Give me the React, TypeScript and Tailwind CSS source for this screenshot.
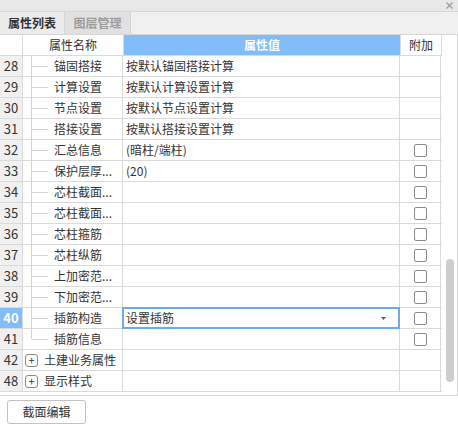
import React from "react";

type Row = {
  no: number;
  name: string;
  value?: string;
  check?: boolean;
  group?: boolean;
  last?: boolean;
  selected?: boolean;
};

const rows: Row[] = [
  { no: 28, name: "锚固搭接", value: "按默认锚固搭接计算" },
  { no: 29, name: "计算设置", value: "按默认计算设置计算" },
  { no: 30, name: "节点设置", value: "按默认节点设置计算" },
  { no: 31, name: "搭接设置", value: "按默认搭接设置计算" },
  { no: 32, name: "汇总信息", value: "(暗柱/端柱)", check: true },
  { no: 33, name: "保护层厚...", value: "(20)", check: true },
  { no: 34, name: "芯柱截面...", check: true },
  { no: 35, name: "芯柱截面...", check: true },
  { no: 36, name: "芯柱箍筋", check: true },
  { no: 37, name: "芯柱纵筋", check: true },
  { no: 38, name: "上加密范...", check: true },
  { no: 39, name: "下加密范...", check: true },
  { no: 40, name: "插筋构造", value: "设置插筋", check: true, selected: true },
  { no: 41, name: "插筋信息", check: true, last: true },
  { no: 42, name: "土建业务属性", group: true },
  { no: 48, name: "显示样式", group: true },
];

function Checkbox() {
  return <div className="w-[13px] h-[13px] rounded-[2px] border border-[#8a8a8a] bg-white" />;
}

function NameCell({ row }: { row: Row }) {
  if (row.group) {
    return (
      <div className="w-[100px] h-full flex items-center border-r border-[#dadada]">
        <div className="ml-[2px] w-[13px] h-[13px] rounded-[3px] border border-[#8a8a8a] flex items-center justify-center text-[11px] leading-none text-[#333]">
          +
        </div>
        <span className="ml-[6px]">{row.name}</span>
      </div>
    );
  }
  return (
    <div className="relative w-[100px] h-full flex items-center border-r border-[#dadada]">
      <div
        className={`absolute left-[8px] top-[-1px] w-px bg-[#d4d4d4] ${row.last ? "h-[11px]" : "h-[22px]"}`}
      />
      <div className="absolute left-[9px] top-[10px] w-[16px] h-px bg-[#d4d4d4]" />
      <span className="ml-[31px] whitespace-nowrap">{row.name}</span>
    </div>
  );
}

export default function App() {
  return (
    <div
      className="w-[458px] h-[427px] bg-white text-[12px] text-[#333] flex flex-col"
      style={{ fontFamily: '"Noto Sans CJK SC", "Noto Sans", sans-serif' }}
    >
      {/* title strip */}
      <div className="h-[12px] bg-[#e8e8e8] border-b border-[#d6d6d6] flex justify-end items-center pr-[5px]">
        <svg width="7" height="7" viewBox="0 0 7 7" className="mb-[1px]">
          <path d="M0.5 0.5 L6.5 6.5 M6.5 0.5 L0.5 6.5" stroke="#9a9a9a" strokeWidth="1.2" />
        </svg>
      </div>

      {/* tabs */}
      <div className="h-[23px] bg-[#f0f0f0] border-b border-[#d6d6d6] flex">
        <div className="w-[65px] h-full bg-[#ebebeb] border-r border-[#d6d6d6] flex items-center justify-center font-bold text-[#333]">
          属性列表
        </div>
        <div className="w-[66px] h-full bg-[#e1e1e1] border-r border-[#d6d6d6] flex items-center justify-center font-bold text-[#9c9c9c]">
          图层管理
        </div>
      </div>

      {/* panel */}
      <div className="h-[361px] flex border-r border-b border-[#d6d6d6]">
        <div className="w-[442px] flex flex-col">
          {/* header */}
          <div className="h-[21px] flex border-b border-[#dadada]">
            <div className="w-[23px] h-full bg-white border-r border-[#dadada]" />
            <div className="w-[101px] h-full flex items-center justify-center border-r border-[#dadada]">
              属性名称
            </div>
            <div className="w-[277px] h-full flex items-center justify-center bg-[#80bdf9] text-white font-bold border-r border-[#dadada]">
              属性值
            </div>
            <div className="w-[41px] h-full flex items-center justify-center border-r border-[#dadada]">
              附加
            </div>
          </div>

          {rows.map((row) => (
            <div key={row.no} className="h-[21px] flex border-b border-[#dadada]">
              <div
                className={`w-[23px] h-full flex items-center justify-center text-[13px] border-r border-[#dadada] ${
                  row.selected ? "bg-[#80bdf9] text-white font-bold" : "bg-[#f0f0f0] text-[#333]"
                }`}
              >
                {row.no}
              </div>
              <NameCell row={row} />
              <div className="relative w-[277px] h-full flex items-center border-r border-[#dadada]">
                {row.selected && (
                  <div className="absolute -left-px -top-px right-[-1px] bottom-[-1px] border-2 border-[#6ea9e9] pointer-events-none" />
                )}
                <span className="ml-[3px] whitespace-nowrap">{row.value}</span>
                {row.selected && (
                  <svg width="5" height="3" viewBox="0 0 5 3" className="absolute right-[13px] top-[9px]">
                    <path d="M0 0 H5 L2.5 3 Z" fill="#555a66" />
                  </svg>
                )}
              </div>
              <div className="w-[41px] h-full flex items-center justify-center border-r border-[#dadada]">
                {row.check && <Checkbox />}
              </div>
            </div>
          ))}
        </div>

        {/* scrollbar */}
        <div className="flex-1 relative">
          <div className="absolute left-[4px] top-[224px] w-[8px] h-[123px] rounded-full bg-[#cdcdcd]" />
        </div>
      </div>

      {/* footer */}
      <div className="flex-1 px-[7px] pt-[4px]">
        <button className="w-[79px] h-[24px] rounded-[3px] border border-[#c2c2c2] bg-white text-[12px] text-[#333]">
          截面编辑
        </button>
      </div>
    </div>
  );
}
